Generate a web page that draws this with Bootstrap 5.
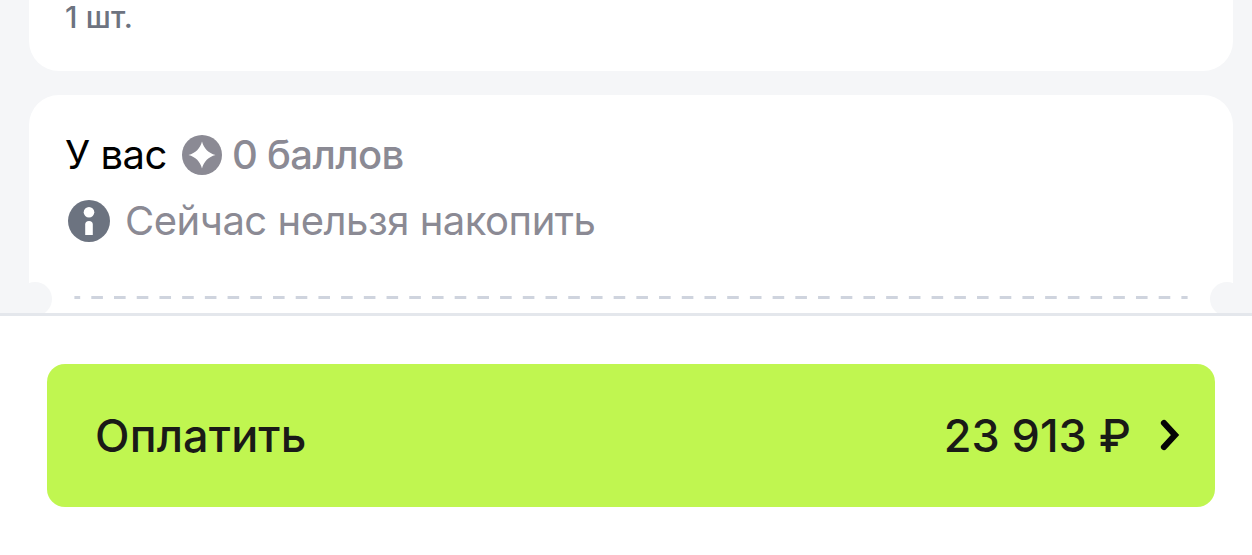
<!DOCTYPE html>
<html lang="ru">
    <head>
        <meta charset="utf-8" />
        <meta name="viewport" content="width=device-width, initial-scale=1" />
        <title>Оплата заказа</title>
        <link
            href="https://cdn.jsdelivr.net/npm/bootstrap@5.3.3/dist/css/bootstrap.min.css"
            rel="stylesheet"
        />
        <style>
            body {
                font-family: Inter, "Liberation Sans", sans-serif;
                height: 555px;
                overflow: hidden;
            }
            .order {
                height: 313px;
                padding: 0 19px 0 29px;
                gap: 24px;
                background: #f5f6f8;
            }
            .panel {
                border-radius: 30px;
                background: #fff;
            }
            .item-panel {
                height: 71px;
                padding: 0 36px;
                border-top-left-radius: 0;
                border-top-right-radius: 0;
            }
            .item-count {
                font-size: 30px;
                line-height: 34px;
                letter-spacing: 0.2px;
                color: #6d7380;
            }
            .bonus-panel {
                height: 260px;
                padding-top: 36px;
            }
            .bonus-row {
                height: 48px;
                padding-left: 36px;
                font-size: 40px;
                line-height: 48px;
                letter-spacing: -0.48px;
                color: #8b8a94;
            }
            .bonus-note {
                margin-top: 18px;
            }
            .points-icon {
                margin-left: 15px;
            }
            .points {
                margin-left: 10px;
                font-weight: 500;
                letter-spacing: -0.65px;
            }
            .info-icon {
                margin-left: 3px;
            }
            .note-text {
                margin-left: 15px;
            }
            .notch {
                width: 34px;
                height: 34px;
                top: 187px;
                border-radius: 50%;
                background: #f5f6f8;
            }
            .notch-left {
                left: -11px;
            }
            .notch-right {
                right: -11px;
            }
            .tear-line {
                margin: 51px 45px 0;
            }
            .pay-bar {
                height: 242px;
                padding: 48px 37px 0 47px;
                border-top: 3px solid #e4e7ec;
                background: #fff;
            }
            .btn-pay {
                --bs-btn-color: #1a1a17;
                --bs-btn-bg: #c0f650;
                --bs-btn-hover-bg: #b5ec43;
                --bs-btn-border-width: 0;
                height: 143px;
                padding: 0 35px 0 48px;
                border-radius: 18px;
                font-size: 45px;
                font-weight: 500;
                line-height: 54px;
            }
            .pay-label {
                letter-spacing: 0.15px;
            }
            .chevron {
                margin: 0 0 2px 29px;
            }
        </style>
    </head>
    <body>
        <main class="order d-flex flex-column overflow-hidden">
            <section class="panel item-panel flex-shrink-0">
                <div class="item-count fw-medium">1 шт.</div>
            </section>
            <section class="panel bonus-panel position-relative flex-shrink-0">
                <div class="bonus-row d-flex align-items-center">
                    <span class="text-black">У вас</span>
                    <svg class="points-icon" width="40" height="40" viewBox="0 0 40 40">
                        <circle cx="20" cy="20" r="20" fill="#8b8a94" />
                        <path d="M20 6.5C21.8 13.5 26.5 18.2 33.5 20C26.5 21.8 21.8 26.5 20 33.5C18.2 26.5 13.5 21.8 6.5 20C13.5 18.2 18.2 13.5 20 6.5Z" fill="#fff" />
                    </svg>
                    <span class="points">0 баллов</span>
                </div>
                <div class="bonus-row bonus-note d-flex align-items-center">
                    <svg class="info-icon" width="42" height="42" viewBox="0 0 42 42">
                        <circle cx="21" cy="21" r="21" fill="#6c7380" />
                        <circle cx="21" cy="12.2" r="5.3" fill="#fff" />
                        <path d="M17.2 24.5Q17.2 21 21 21T24.8 24.5V35H17.2Z" fill="#fff" />
                    </svg>
                    <span class="note-text">Сейчас нельзя накопить</span>
                </div>
                <svg class="tear-line d-block" width="1114" height="3">
                    <path d="M0.4 1.5H1113.6" stroke="#cfd4de" stroke-width="3" stroke-dasharray="11.6 11.11" stroke-dashoffset="5.8" />
                </svg>
                <span class="notch notch-left position-absolute"></span>
                <span class="notch notch-right position-absolute"></span>
            </section>
        </main>
        <footer class="pay-bar">
            <button type="button" class="btn btn-pay w-100 d-flex align-items-center">
                <span class="pay-label">Оплатить</span>
                <span class="ms-auto">23 913 ₽</span>
                <svg class="chevron" width="20" height="32" viewBox="0 0 20 32">
                    <path d="M4 4L15 16L4 28" fill="none" stroke="#050505" stroke-width="6.2" stroke-linecap="round" />
                </svg>
            </button>
        </footer>
        <script src="https://cdn.jsdelivr.net/npm/bootstrap@5.3.3/dist/js/bootstrap.bundle.min.js"></script>
    </body>
</html>
